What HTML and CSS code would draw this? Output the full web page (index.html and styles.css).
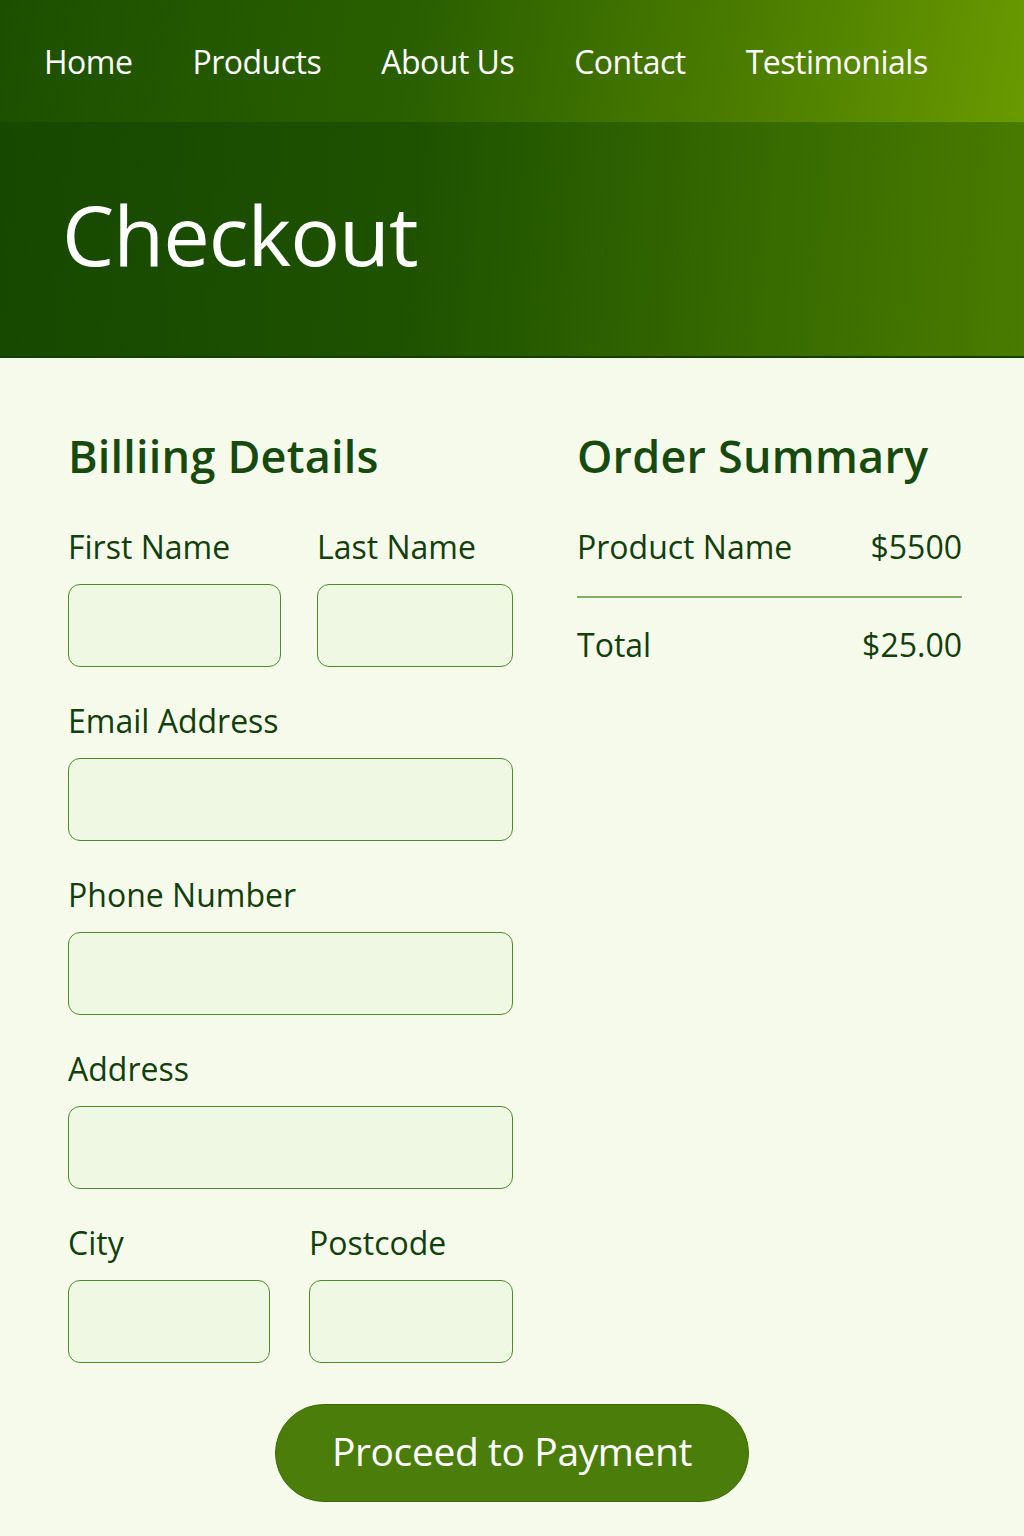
FILE: index.html
```html
<!DOCTYPE html>
<html lang="en">
<head>
<meta charset="utf-8">
<title>Checkout</title>
<link rel="stylesheet" href="styles.css">
</head>
<body>
<nav class="nav">
  <a class="nav-link" href="#">Home</a>
  <a class="nav-link" href="#">Products</a>
  <a class="nav-link" href="#">About Us</a>
  <a class="nav-link" href="#">Contact</a>
  <a class="nav-link" href="#">Testimonials</a>
</nav>
<header class="hero">
  <h1 class="hero-title">Checkout</h1>
</header>
<main class="content">
  <div class="columns">
    <section class="billing">
      <h2 class="section-title">Billiing Details</h2>
      <div class="row row-name">
        <div class="field">
          <label class="label">First Name</label>
          <div class="input"></div>
        </div>
        <div class="field">
          <label class="label">Last Name</label>
          <div class="input"></div>
        </div>
      </div>
      <div class="field">
        <label class="label">Email Address</label>
        <div class="input"></div>
      </div>
      <div class="field">
        <label class="label">Phone Number</label>
        <div class="input"></div>
      </div>
      <div class="field">
        <label class="label">Address</label>
        <div class="input"></div>
      </div>
      <div class="row row-city">
        <div class="field">
          <label class="label">City</label>
          <div class="input"></div>
        </div>
        <div class="field">
          <label class="label">Postcode</label>
          <div class="input"></div>
        </div>
      </div>
    </section>
    <aside class="summary">
      <h2 class="section-title">Order Summary</h2>
      <div class="summary-row">
        <span>Product Name</span>
        <span>$5500</span>
      </div>
      <div class="summary-row total">
        <span>Total</span>
        <span>$25.00</span>
      </div>
    </aside>
  </div>
  <div class="actions">
    <button class="pay-btn">Proceed to Payment</button>
  </div>
</main>
</body>
</html>
```
FILE: styles.css
```css
* { box-sizing: border-box; }
html, body {
  margin: 0;
  padding: 0;
}
body {
  font-family: "Open Sans", "Noto Sans", sans-serif;
  background: #f5faeb;
  color: #123f0c;
  width: 1024px;
  min-height: 1536px;
}
.nav {
  height: 122px;
  display: flex;
  align-items: center;
  padding-left: 44px;
  gap: 60px;
  background: linear-gradient(100deg, #1c5000 0%, #2a5f00 40%, #4e7f00 75%, #6a9a00 100%);
}
.nav-link {
  color: #ffffff;
  text-decoration: none;
  font-size: 32px;
  letter-spacing: -0.5px;
}
.hero {
  height: 236px;
  display: flex;
  align-items: center;
  padding-left: 62px;
  padding-bottom: 12px;
  background: linear-gradient(95deg, #164800 0%, #1e5200 40%, #386b00 75%, #4a7b00 100%);
  border-bottom: 2px solid #124200;
}
.hero-title {
  margin: 0;
  color: #ffffff;
  font-size: 83px;
  font-weight: 500;
  letter-spacing: -1px;
  line-height: 1;
}
.content {
  padding: 68px 68px 40px 68px;
}
.columns {
  display: grid;
  grid-template-columns: 445px 385px;
  column-gap: 64px;
}
.section-title {
  margin: 0;
  font-size: 45px;
  font-weight: 560;
  color: #174a0f;
  line-height: 60px;
  letter-spacing: 0.2px;
}
.billing .section-title { margin-bottom: 41px; }
.row {
  display: grid;
}
.row-name { grid-template-columns: 213px 196px; column-gap: 36px; }
.row-city { grid-template-columns: 202px 204px; column-gap: 39px; }
.field {
  display: flex;
  flex-direction: column;
  margin-bottom: 34px;
}
.label {
  font-size: 32px;
  line-height: 40px;
  color: #123f0c;
  margin-bottom: 17px;
}
.input {
  height: 83px;
  border: 1px solid #4f8a2c;
  border-radius: 12px;
  background: #eff8e2;
}
.summary .section-title { margin-bottom: 41px; }
.summary-row {
  display: flex;
  justify-content: space-between;
  font-size: 32px;
  line-height: 40px;
  color: #123f0c;
  padding-bottom: 29px;
  border-bottom: 2px solid #82ad64;
}
.summary-row.total {
  border-bottom: none;
  padding-top: 27px;
}
.actions {
  display: flex;
  justify-content: center;
  margin-top: 7px;
}
.pay-btn {
  width: 474px;
  height: 98px;
  padding-bottom: 6px;
  border-radius: 49px;
  border: 1px solid #3d6a06;
  background: #4b7d0b;
  color: #ffffff;
  font-family: "Open Sans", "Noto Sans", sans-serif;
  font-size: 39px;
  letter-spacing: -0.4px;
}
```
